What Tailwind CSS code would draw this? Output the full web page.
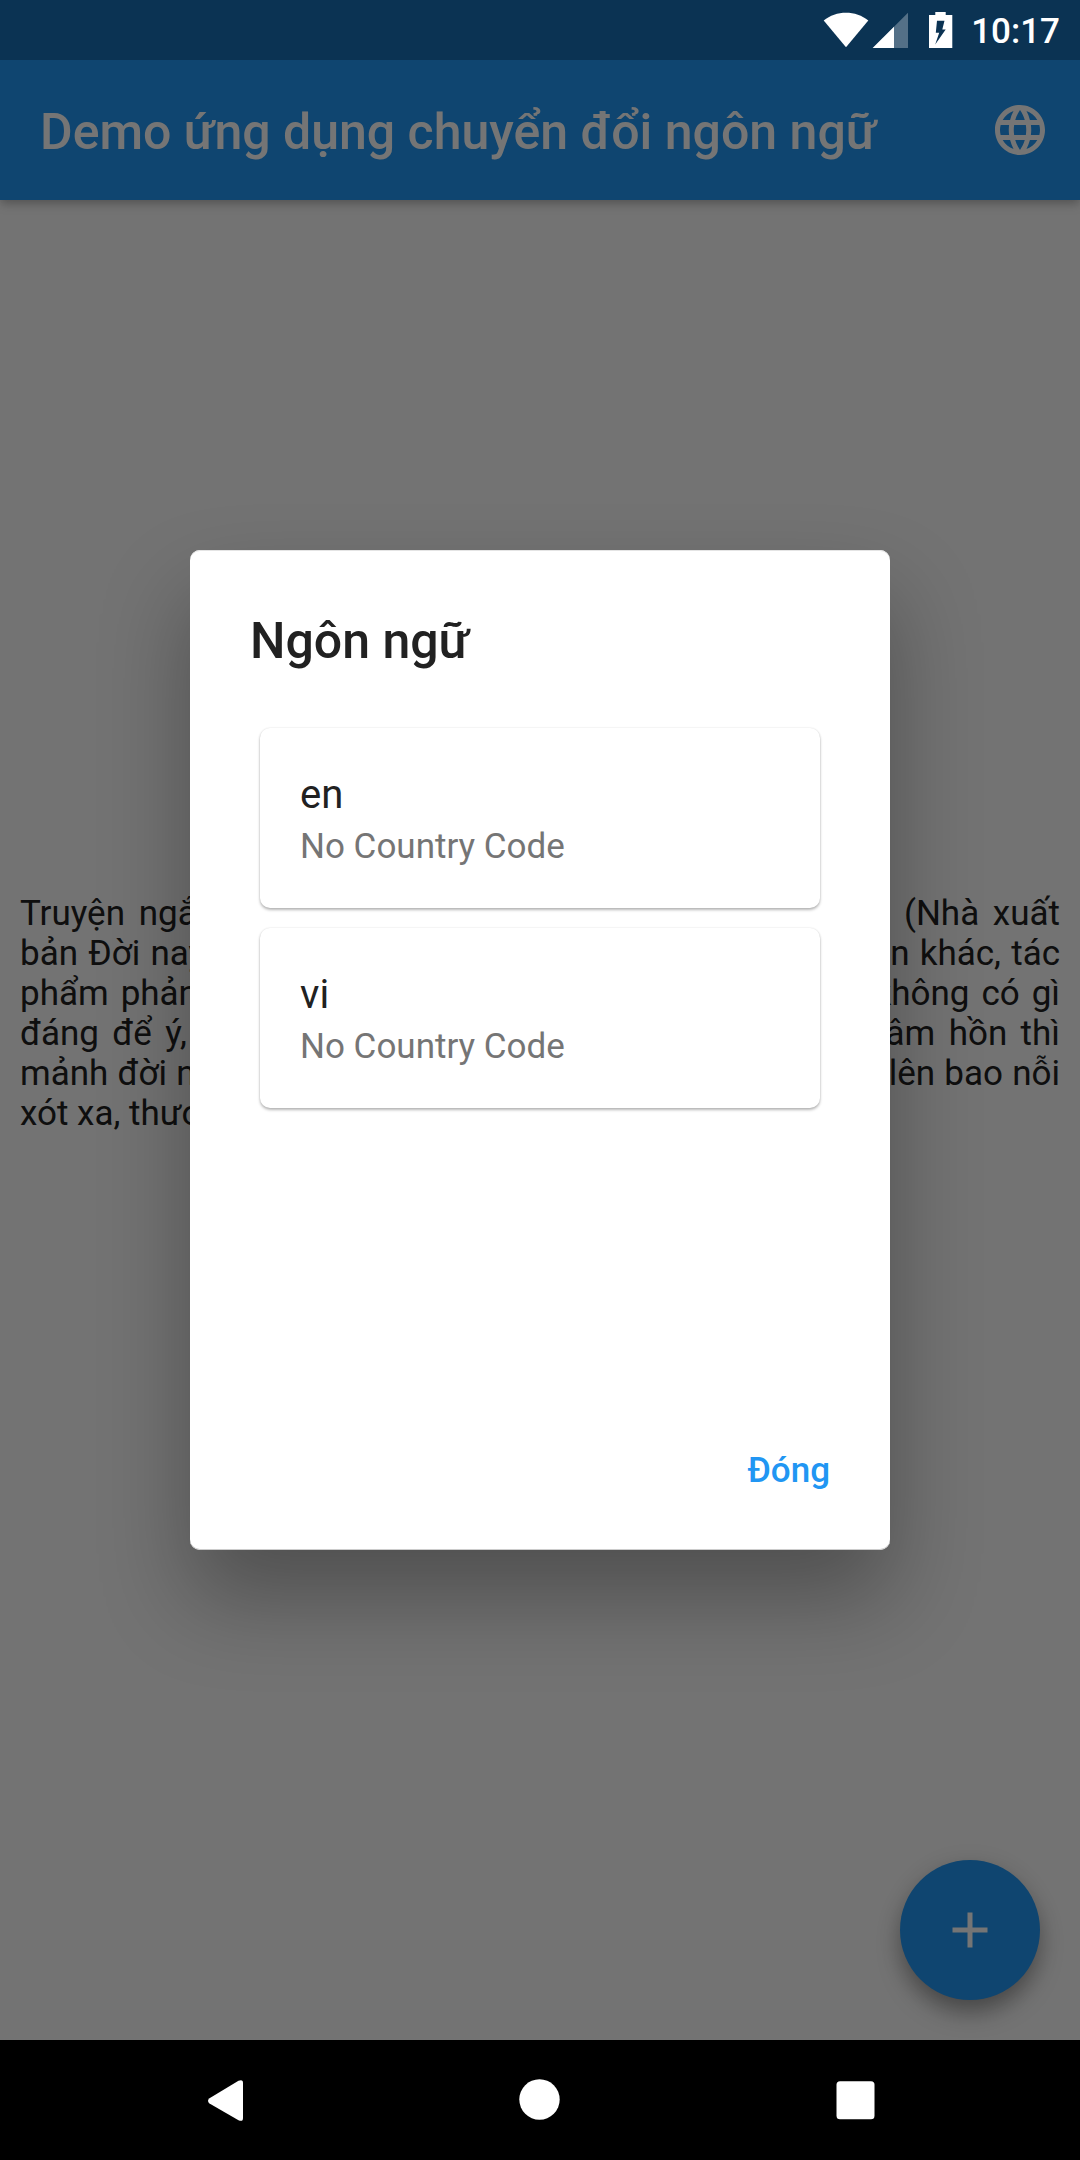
<!DOCTYPE html>
<html lang="vi">
<head>
<meta charset="utf-8">
<title>Demo ứng dụng chuyển đổi ngôn ngữ</title>
<script src="https://cdn.jsdelivr.net/npm/@tailwindcss/browser@4"></script>
</head>
<body class="relative flex h-[2160px] w-[1080px] flex-col overflow-hidden bg-[#fafafa] font-[Roboto,sans-serif]">

  <!-- App bar, extends under the status bar -->
  <header class="relative shrink-0 bg-[#2196f3] shadow-[0_4px_8px_-1px_rgba(0,0,0,0.18),0_4px_12px_rgba(0,0,0,0.12)]">
    <div class="h-[60px] bg-black/25"></div>
    <div class="flex h-[140px] items-center justify-between pr-[30px] pl-10">
      <h1 class="pt-1 text-[50px] leading-[60px] font-medium whitespace-nowrap text-white">Demo ứng dụng chuyển đổi ngôn ngữ</h1>
      <svg class="size-[60px] shrink-0 fill-white" viewBox="0 0 24 24"><path d="M11.99 2C6.47 2 2 6.48 2 12s4.47 10 9.99 10C17.52 22 22 17.52 22 12S17.52 2 11.99 2zm6.93 6h-2.95c-.32-1.25-.78-2.45-1.38-3.56 1.84.63 3.37 1.91 4.33 3.56zM12 4.04c.83 1.2 1.48 2.53 1.91 3.96h-3.82c.43-1.43 1.08-2.76 1.91-3.96zM4.26 14C4.1 13.36 4 12.69 4 12s.1-1.36.26-2h3.38c-.08.66-.14 1.32-.14 2 0 .68.06 1.34.14 2H4.26zm.82 2h2.95c.32 1.25.78 2.45 1.38 3.56-1.84-.63-3.37-1.9-4.33-3.56zm2.95-8H5.08c.96-1.66 2.49-2.93 4.33-3.56C8.81 5.55 8.35 6.75 8.03 8zM12 19.96c-.83-1.2-1.48-2.53-1.91-3.96h3.82c-.43 1.43-1.08 2.76-1.91 3.96zM14.34 14H9.66c-.09-.66-.16-1.32-.16-2 0-.68.07-1.35.16-2h4.68c.09.65.16 1.32.16 2 0 .68-.07 1.34-.16 2zm.25 5.56c.6-1.11 1.06-2.31 1.38-3.56h2.95c-.96 1.65-2.49 2.93-4.33 3.56zM16.36 14c.08-.66.14-1.32.14-2 0-.68-.06-1.34-.14-2h3.38c.16.64.26 1.31.26 2s-.1 1.36-.26 2h-3.38z"/></svg>
    </div>
  </header>

  <!-- Page text -->
  <main class="flex flex-1 flex-col px-5 pt-[694px] text-[35px] leading-[40px] whitespace-nowrap text-[#212121]">
    <div class="flex justify-between [word-spacing:5px]"><span>Truyện ngắn</span><span>(Nhà xuất</span></div>
    <div class="flex justify-between [word-spacing:1.5px]"><span>bản Đời nay</span><span>n khác, tác</span></div>
    <div class="flex justify-between [word-spacing:3.3px]"><span>phẩm phản</span><span>không có gì</span></div>
    <div class="flex justify-between [word-spacing:4.7px]"><span>đáng để ý,</span><span>tâm hồn thì</span></div>
    <div class="flex justify-between [word-spacing:0.5px]"><span>mảnh đời n</span><span>lên bao nỗi</span></div>
    <div><span>xót xa, thươ</span></div>
  </main>

  <!-- Floating action button -->
  <button class="absolute top-[1860px] left-[900px] flex size-[140px] items-center justify-center rounded-full bg-[#2196f3] shadow-[0_14px_24px_-2px_rgba(0,0,0,0.34),0_4px_24px_rgba(0,0,0,0.1)]">
    <svg class="size-[60px] fill-white" viewBox="0 0 24 24"><path d="M19 13h-6v6h-2v-6H5v-2h6V5h2v6h6v2z"/></svg>
  </button>

  <!-- Scrim with dialog -->
  <div class="absolute inset-x-0 top-0 flex h-[2040px] items-start justify-center bg-black/54 pt-[550px]">
    <section class="flex h-[1000px] w-[700px] flex-col rounded-[10px] bg-white px-[60px] pt-[61px] shadow-[0_48px_90px_rgba(0,0,0,0.31),inset_0_-1px_0_#ccc,inset_0_1px_0_#e4e4e4]">
      <h2 class="text-[50px] leading-[60px] font-medium text-[#212121]">Ngôn ngữ</h2>
      <ul class="mx-[10px] mt-[57px] flex flex-col gap-5">
        <li class="flex h-[180px] flex-col rounded-[10px] bg-white px-10 pt-[42px] shadow-[0_2px_3px_rgba(0,0,0,0.28),0_0_2px_rgba(0,0,0,0.12)]">
          <span class="text-[40px] leading-[50px] text-[#212121]">en</span>
          <span class="mt-1 text-[35px] leading-[45px] text-[#757575]">No Country Code</span>
        </li>
        <li class="flex h-[180px] flex-col rounded-[10px] bg-white px-10 pt-[42px] shadow-[0_2px_3px_rgba(0,0,0,0.28),0_0_2px_rgba(0,0,0,0.12)]">
          <span class="text-[40px] leading-[50px] text-[#212121]">vi</span>
          <span class="mt-1 text-[35px] leading-[45px] text-[#757575]">No Country Code</span>
        </li>
      </ul>
      <button class="mt-auto mb-[59px] self-end text-[35px] leading-[40px] font-medium text-[#2196f3]">Đóng</button>
    </section>
  </div>

  <!-- Status bar -->
  <div class="absolute inset-x-0 top-0 flex h-[60px] items-center justify-end pr-5 text-white">
    <svg class="h-[60px] w-[140px]" viewBox="820 0 140 60">
      <path fill="#fff" d="M823.7 20.5C836 10 856 10 868.3 20.5L846 47.3z"/>
      <path fill="#fff" fill-opacity=".3" d="M908 12.7V48H872.7z"/>
      <path fill="#fff" d="M894 26.7V48H872.7z"/>
      <path fill="#fff" fill-rule="evenodd" d="M935.3 12H945.7V15H952.3V48H929V15H935.3zM937 20.7L935.8 32.7H939.2L935.2 44.5L945.7 29.5H942.3L944.5 20.7z"/>
    </svg>
    <time class="ml-[11px] pt-[3px] text-[35px] leading-[40px] font-medium">10:17</time>
  </div>

  <!-- Navigation bar -->
  <nav class="relative h-[120px] shrink-0 bg-black">
    <svg class="block h-[120px] w-[1080px] fill-white" viewBox="0 2040 1080 120">
      <path d="M209.5 2098.2L238.5 2080.8Q243 2078.8 243 2083V2118Q243 2122.2 238.5 2120.2L209.5 2103.400Q206.5 2100.8 209.5 2098.2z"/>
      <circle cx="539.5" cy="2099.5" r="20.2"/>
      <rect x="836.500" y="2081.3" width="38" height="38" rx="3.5"/>
    </svg>
  </nav>
</body>
</html>
